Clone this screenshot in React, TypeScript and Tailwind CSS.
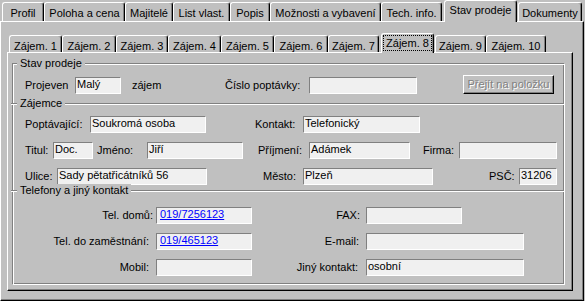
import React from "react";

type TabDef = { label: string; w: string; sel?: boolean; ml?: string };

const outerTabs: TabDef[] = [
  { label: "Profil", w: "w-[42px]" },
  { label: "Poloha a cena", w: "w-[81px]" },
  { label: "Majitelé", w: "w-[48px]" },
  { label: "List vlast.", w: "w-[57px]" },
  { label: "Popis", w: "w-[40px]" },
  { label: "Možnosti a vybavení", w: "w-[111px]" },
  { label: "Tech. info.", w: "w-[61px]" },
  { label: "Stav prodeje", w: "w-[73px]", sel: true, ml: "ml-[2px]" },
  { label: "Dokumenty", w: "w-[64px]", ml: "ml-[1px]" },
];

const innerTabs: TabDef[] = [
  { label: "Zájem. 1", w: "w-[53px]" },
  { label: "Zájem. 2", w: "w-[54px]" },
  { label: "Zájem. 3", w: "w-[52px]" },
  { label: "Zájem. 4", w: "w-[53px]" },
  { label: "Zájem. 5", w: "w-[53px]" },
  { label: "Zájem. 6", w: "w-[54px]" },
  { label: "Zájem. 7", w: "w-[51px]" },
  { label: "Zájem. 8", w: "w-[53px]", sel: true, ml: "ml-[2px]" },
  { label: "Zájem. 9", w: "w-[51px]", ml: "ml-[1px]" },
  { label: "Zájem. 10", w: "w-[60px]" },
];

const tabEdge =
  "shrink-0 whitespace-nowrap rounded-t-[3px] border-l border-t border-r border-l-white border-t-white border-r-black bg-[#c0c0c0] text-center leading-[13px] shadow-[inset_-1px_0_0_#808080]";

const OuterTab = ({ t }: { t: TabDef }) =>
  t.sel ? (
    <div className={`${tabEdge} ${t.w} ${t.ml ?? ""} relative z-10 -mb-[1px] h-[22px] pt-[3px]`}>
      {t.label}
    </div>
  ) : (
    <div className={`${tabEdge} ${t.w} ${t.ml ?? ""} h-[19px] pt-[4px]`}>{t.label}</div>
  );

const InnerTab = ({ t }: { t: TabDef }) =>
  t.sel ? (
    <div className={`${tabEdge} ${t.w} ${t.ml ?? ""} relative z-10 -mb-[1px] h-[20px]`}>
      <div className="ml-[1px] mt-[1px] h-[16px] w-[49px] border border-dotted border-black pt-[1px] text-center leading-[13px]">
        {t.label}
      </div>
    </div>
  ) : (
    <div className={`${tabEdge} ${t.w} ${t.ml ?? ""} h-[17px] pt-[4px]`}>{t.label}</div>
  );

const Edit = ({ className = "", children }: { className?: string; children?: React.ReactNode }) => (
  <div
    className={`h-[17px] shrink-0 overflow-hidden whitespace-nowrap border border-t-[#808080] border-l-[#808080] border-r-white border-b-white bg-[#f0f0f0] pl-[1px] leading-[13px] ${className}`}
  >
    {children}
  </div>
);

const Link = ({ children }: { children: React.ReactNode }) => (
  <span className="pl-[2px] text-[#0000ff] underline">{children}</span>
);

const Lbl = ({ className = "", children }: { className?: string; children: React.ReactNode }) => (
  <span className={`shrink-0 whitespace-nowrap leading-[17px] ${className}`}>{children}</span>
);

const Separator = ({ label }: { label: string }) => (
  <div className="relative -ml-[2px] h-[2px] border-t border-b border-t-[#808080] border-b-white">
    <span className="absolute left-[6px] top-[-7px] whitespace-nowrap bg-[#c0c0c0] pl-[3px] pr-[3px] leading-[13px]">
      {label}
    </span>
  </div>
);

export default function App() {
  return (
    <div className="h-[301px] w-[585px] overflow-hidden bg-[#c0c0c0] font-['Liberation_Sans',Arial,sans-serif] text-[11px] text-black select-none">
      {/* top tab row */}
      <div className="flex h-[21px] items-end pl-[2px]">
        {outerTabs.map((t) => (
          <OuterTab key={t.label} t={t} />
        ))}
      </div>

      {/* outer page */}
      <div className="h-[280px] w-[584px] border border-t-white border-l-white border-r-black border-b-black pl-[6px] pt-[11px] shadow-[inset_-1px_-1px_0_#808080]">
        <div className="flex h-[19px] items-end pl-[2px]">
          {innerTabs.map((t) => (
            <InnerTab key={t.label} t={t} />
          ))}
        </div>

        {/* inner page */}
        <div className="h-[239px] w-[566px] border border-t-white border-l-white border-r-black border-b-black pl-[4px] pt-[10px] shadow-[inset_-1px_-1px_0_#808080]">
          <div className="relative h-[222px] w-[553px] border border-t-[#808080] border-l-[#808080] border-r-white border-b-white shadow-[inset_1px_1px_0_#fff,inset_-1px_-1px_0_#808080]">
            <span className="absolute left-[4px] top-[-7px] whitespace-nowrap bg-[#c0c0c0] pl-[3px] pr-[3px] leading-[13px]">
              Stav prodeje
            </span>

            {/* Stav prodeje */}
            <div className="mt-[11px] flex h-[19px] items-start pl-[12px]">
              <Lbl className="mt-[2px] w-[50px]">Projeven</Lbl>
              <Edit className="mt-[2px] w-[46px]">Malý</Edit>
              <Lbl className="ml-[11px] mt-[2px] w-[93px]">zájem</Lbl>
              <Lbl className="mt-[2px] w-[84px]">Číslo poptávky:</Lbl>
              <Edit className="mt-[2px] w-[108px]" />
              <button
                disabled
                className="ml-[46px] h-[19px] w-[91px] shrink-0 border border-t-white border-l-white border-r-black border-b-black bg-[#c0c0c0] text-center leading-[17px] text-[#808080] shadow-[inset_-1px_-1px_0_#808080] [text-shadow:1px_1px_0_#fff]"
              >
                Přejít na položku
              </button>
            </div>

            <div className="mt-[9px]">
              <Separator label="Zájemce" />
            </div>

            {/* Zájemce */}
            <div className="mt-[11px] flex h-[17px] items-start pl-[12px]">
              <Lbl className="w-[65px]">Poptávající:</Lbl>
              <Edit className="w-[116px]">Soukromá osoba</Edit>
              <Lbl className="ml-[49px] w-[48px]">Kontakt:</Lbl>
              <Edit className="w-[117px]">Telefonický</Edit>
            </div>
            <div className="mt-[9px] flex h-[17px] items-start pl-[12px]">
              <Lbl className="w-[28px]">Titul:</Lbl>
              <Edit className="w-[40px]">Doc.</Edit>
              <Lbl className="ml-[4px] w-[50px]">Jméno:</Lbl>
              <Edit className="w-[96px]">Jiří</Edit>
              <Lbl className="ml-[15px] w-[51px]">Příjmení:</Lbl>
              <Edit className="w-[101px]">Adámek</Edit>
              <Lbl className="ml-[13px] w-[36px]">Firma:</Lbl>
              <Edit className="w-[98px]" />
            </div>
            <div className="mt-[9px] flex h-[17px] items-start pl-[12px]">
              <Lbl className="w-[32px]">Ulice:</Lbl>
              <Edit className="w-[150px]">Sady pětatřicátníků 56</Edit>
              <Lbl className="ml-[56px] w-[40px]">Město:</Lbl>
              <Edit className="w-[130px]">Plzeň</Edit>
              <Lbl className="ml-[56px] w-[30px]">PSČ:</Lbl>
              <Edit className="w-[38px]">31206</Edit>
            </div>

            <div className="mt-[5px]">
              <Separator label="Telefony a jiný kontakt" />
            </div>

            {/* Telefony a jiný kontakt */}
            <div className="mt-[15px] flex h-[17px] items-start">
              <Lbl className="w-[140px] text-right">Tel. domů:</Lbl>
              <Edit className="ml-[3px] w-[96px]">
                <Link>019/7256123</Link>
              </Edit>
              <Lbl className="w-[108px] text-right">FAX:</Lbl>
              <Edit className="ml-[6px] w-[96px]" />
            </div>
            <div className="mt-[9px] flex h-[17px] items-start">
              <Lbl className="w-[136px] text-right">Tel. do zaměstnání:</Lbl>
              <Edit className="ml-[7px] w-[96px]">
                <Link>019/465123</Link>
              </Edit>
              <Lbl className="w-[107px] text-right">E-mail:</Lbl>
              <Edit className="ml-[7px] w-[158px]" />
            </div>
            <div className="mt-[9px] flex h-[17px] items-start">
              <Lbl className="w-[136px] text-right">Mobil:</Lbl>
              <Edit className="ml-[7px] w-[96px]" />
              <Lbl className="w-[106px] text-right">Jiný kontakt:</Lbl>
              <Edit className="ml-[8px] w-[158px]">osobní</Edit>
            </div>
          </div>
        </div>
      </div>
    </div>
  );
}
